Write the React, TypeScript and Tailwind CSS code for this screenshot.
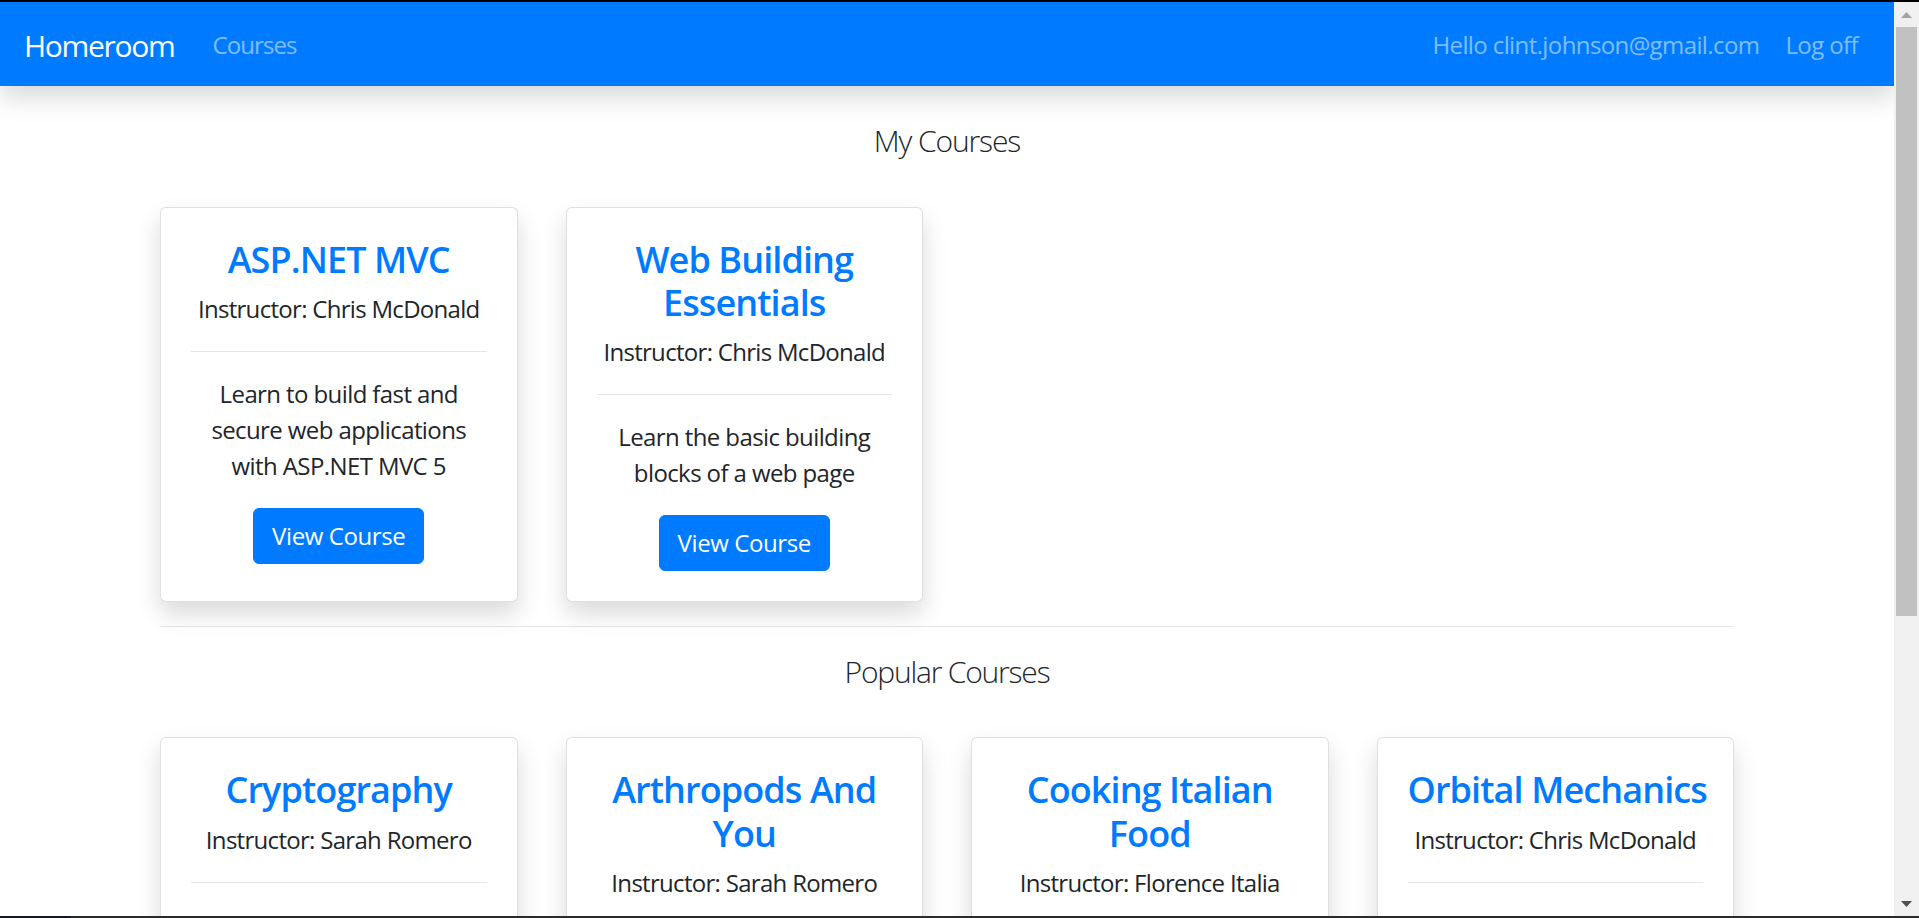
import React from "react";

const myCourses = [
  {
    title: ["ASP.NET MVC"],
    instructor: "Chris McDonald",
    desc: ["Learn to build fast and", "secure web applications", "with ASP.NET MVC 5"],
  },
  {
    title: ["Web Building", "Essentials"],
    instructor: "Chris McDonald",
    desc: ["Learn the basic building", "blocks of a web page"],
  },
];

const popularCourses = [
  {
    title: ["Cryptography"],
    instructor: "Sarah Romero",
    desc: ["Learn how to keep your", "secrets safe from prying", "eyes"],
  },
  {
    title: ["Arthropods And", "You"],
    instructor: "Sarah Romero",
    desc: ["All about the creepy", "crawlies that share our", "world"],
  },
  {
    title: ["Cooking Italian", "Food"],
    instructor: "Florence Italia",
    desc: ["Pasta, pizza and all the", "classics of the kitchen"],
  },
  {
    title: ["Orbital Mechanics"],
    instructor: "Chris McDonald",
    desc: ["Learn how satellites", "and planets stay in orbit"],
  },
];

type Course = { title: string[]; instructor: string; desc: string[] };

const CourseCard = ({ course }: { course: Course }) => (
  <div className="rounded-[6px] border border-black/[0.125] bg-white px-[30px] pt-[30px] pb-[30px] text-center shadow-[0_12px_24px_rgba(0,0,0,0.15)]">
    <h4 className="mb-[10px] text-[36px] leading-[1.2] font-semibold tracking-[-0.9px] whitespace-nowrap text-[#007bff]">
      {course.title.map((t, i) => (
        <div key={i}>{t}</div>
      ))}
    </h4>
    <p className="text-[24px] leading-[36px] tracking-[-0.7px] whitespace-nowrap text-[#212529]">
      Instructor: {course.instructor}
    </p>
    <hr className="my-[24px] border-t border-black/10" />
    <p className="mb-[24px] text-[24px] leading-[36px] tracking-[-0.6px] whitespace-nowrap text-[#212529]">
      {course.desc.map((d, i) => (
        <span key={i} className="block">
          {d}
        </span>
      ))}
    </p>
    <button className="rounded-[6px] border border-[#007bff] bg-[#007bff] px-[18px] py-[9px] text-[24px] leading-[36px] tracking-[-0.4px] text-white">
      View Course
    </button>
  </div>
);

export default function App() {
  return (
    <div
      className="flex h-[918px] w-full flex-col overflow-hidden bg-white"
      style={{ fontFamily: '"Open Sans", "Noto Sans", sans-serif' }}
    >
      <div className="h-[2px] bg-black" />
      <div className="flex min-h-0 flex-1">
        <div className="min-w-0 flex-1 overflow-hidden">
          {/* Navbar */}
          <nav className="relative z-10 flex h-[84px] items-center bg-[#007bff] pt-[2px] pr-[36px] pl-[24px] shadow-[0_12px_24px_rgba(0,0,0,0.15)]">
            <span className="mr-[38px] text-[30px] tracking-[-1.3px] text-white">Homeroom</span>
            <span className="text-[24px] tracking-[-0.9px] text-white/50">Courses</span>
            <div className="ml-auto flex items-center gap-[26px] text-[24px] tracking-[-0.6px] text-white/50">
              <span>Hello clint.johnson@gmail.com</span>
              <span>Log off</span>
            </div>
          </nav>

          <div className="mx-auto w-[1574px]">
            <h2 className="mt-[37px] mb-[48px] text-center text-[30px] leading-[36px] font-light tracking-[-1.1px] text-[#212529]">
              My Courses
            </h2>
            <div className="grid grid-cols-4 gap-x-[48px]">
              {myCourses.map((c, i) => (
                <CourseCard key={i} course={c} />
              ))}
            </div>
            <hr className="mt-[24px] border-t border-black/10" />
            <h2 className="mt-[27px] mb-[47px] text-center text-[30px] leading-[36px] font-light tracking-[-1.2px] text-[#212529]">
              Popular Courses
            </h2>
            <div className="grid grid-cols-4 gap-x-[48px]">
              {popularCourses.map((c, i) => (
                <CourseCard key={i} course={c} />
              ))}
            </div>
          </div>
        </div>

        {/* Scrollbar */}
        <div className="flex w-[25px] flex-col bg-[#f0f0f0]">
          <div className="flex h-[25px] items-center justify-center">
            <svg width="11" height="6" viewBox="0 0 11 6">
              <polygon points="5.5,0 11,6 0,6" fill="#a3a3a3" />
            </svg>
          </div>
          <div className="mx-[2px] h-[589px] bg-[#c1c1c1]" />
          <div className="flex-1" />
          <div className="flex h-[25px] items-center justify-center">
            <svg width="11" height="6" viewBox="0 0 11 6">
              <polygon points="0,0 11,0 5.5,6" fill="#505050" />
            </svg>
          </div>
        </div>
      </div>
      <div className="flex h-[2px]">
        <div className="w-[71px] bg-[#141826]" />
        <div className="flex-1 bg-[#2b2b2b]" />
      </div>
    </div>
  );
}
